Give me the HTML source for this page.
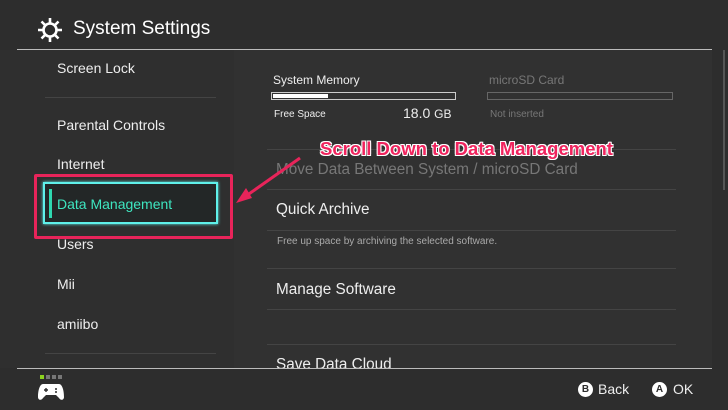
<!DOCTYPE html>
<html><head><style>
body{margin:0;width:728px;height:410px;background:#2d2d2d;font-family:"Liberation Sans","DejaVu Sans",sans-serif;overflow:hidden;position:relative;color:#fff}
.a{position:absolute;white-space:nowrap}
.sep{position:absolute;height:1px;background:#444}
.l{font-size:14px;color:#eee}
</style></head><body>
<div class="a" style="left:0;top:50px;width:234px;height:318px;background:#2f2f2f"></div>
<div class="a" style="left:234px;top:50px;width:478px;height:318px;background:#313131"></div>
<svg class="a" style="left:37px;top:17px" width="26" height="26" viewBox="0 0 26 26"><g fill="none" stroke="#fff" stroke-width="2.6"><circle cx="13" cy="13" r="6.5"/><path d="M13 1v5M13 20v5M1 13h5M20 13h5M4.5 4.5l3.5 3.5M18 18l3.5 3.5M4.5 21.5L8 18M18 8l3.5-3.5"/></g></svg>
<div class="a" style="left:73px;top:18px;font-size:19px;color:#fff">System Settings</div>
<div class="a" style="left:17px;top:49px;width:695px;height:1px;background:#bbb"></div>
<div class="a l" style="left:57px;top:60px">Screen Lock</div>
<div class="sep" style="left:45px;top:97px;width:171px"></div>
<div class="a l" style="left:57px;top:117px">Parental Controls</div>
<div class="a l" style="left:57px;top:156px">Internet</div>
<div class="a" style="left:43px;top:182px;width:171px;height:38px;background:#232727;border:2px solid #5ff0ea;box-shadow:0 0 3px #5ff0ea"></div>
<div class="a" style="left:49px;top:189px;width:3px;height:29px;background:#2ed8b0"></div>
<div class="a" style="left:57px;top:196px;font-size:14px;color:#3ee6c0">Data Management</div>
<div class="a" style="left:34px;top:174px;width:193px;height:59px;border:3px solid #e8245a;border-radius:2px"></div>
<div class="a l" style="left:57px;top:236px">Users</div>
<div class="a l" style="left:57px;top:276px">Mii</div>
<div class="a l" style="left:57px;top:316px">amiibo</div>
<div class="sep" style="left:45px;top:353px;width:171px"></div>

<div class="a" style="left:273px;top:73px;font-size:12px;color:#eee">System Memory</div>
<div class="a" style="left:271px;top:92px;width:183px;height:6px;border:1px solid #ccc"></div>
<div class="a" style="left:273px;top:94px;width:55px;height:4px;background:#fff"></div>
<div class="a" style="left:274px;top:109px;font-size:10px;color:#eee">Free Space</div>
<div class="a" style="left:403px;top:105px;font-size:14px;color:#eee">18.0 <span style="font-size:12px">GB</span></div>
<div class="a" style="left:489px;top:73px;font-size:12px;color:#777">microSD Card</div>
<div class="a" style="left:487px;top:92px;width:184px;height:6px;border:1px solid #666"></div>
<div class="a" style="left:490px;top:109px;font-size:10px;color:#777">Not inserted</div>
<div class="sep" style="left:267px;top:149px;width:409px"></div>
<div class="a" style="left:276px;top:161px;font-size:15.3px;color:#777">Move Data Between System / microSD Card</div>
<div class="sep" style="left:267px;top:189px;width:409px"></div>
<div class="a" style="left:276px;top:201px;font-size:15.3px;color:#eee">Quick Archive</div>
<div class="sep" style="left:267px;top:230px;width:409px"></div>
<div class="a" style="left:277px;top:236px;font-size:10px;color:#aaa">Free up space by archiving the selected software.</div>
<div class="sep" style="left:267px;top:268px;width:409px"></div>
<div class="a" style="left:276px;top:281px;font-size:15.3px;color:#eee">Manage Software</div>
<div class="sep" style="left:267px;top:309px;width:409px"></div>
<div class="sep" style="left:267px;top:344px;width:409px"></div>
<div class="a" style="left:276px;top:356px;height:12px;overflow:hidden;font-size:15.3px;color:#eee;line-height:18px">Save Data Cloud</div>
<div class="a" style="left:723px;top:50px;width:2px;height:140px;background:#555"></div>

<div class="a" style="left:17px;top:368px;width:695px;height:1px;background:#bbb"></div>
<div class="a" style="left:40px;top:375px;width:4px;height:4px;background:#8cd31e"></div>
<div class="a" style="left:46px;top:375px;width:4px;height:4px;background:#777"></div>
<div class="a" style="left:52px;top:375px;width:4px;height:4px;background:#777"></div>
<div class="a" style="left:58px;top:375px;width:4px;height:4px;background:#777"></div>
<svg class="a" style="left:38px;top:383px" width="26" height="18" viewBox="0 0 26 18"><path d="M5 1h16c3 0 5 6 5 13c0 3-3 4-5 1l-3-3H8l-3 3c-2 3-5 2-5-1C0 7 2 1 5 1z" fill="#fff"/><path d="M6 7h4M8 5v4" stroke="#2d2d2d" stroke-width="1.4"/><circle cx="18" cy="6" r="1" fill="#2d2d2d"/><circle cx="18" cy="9" r="1" fill="#2d2d2d"/></svg>
<div class="a" style="left:578px;top:382px;width:15px;height:15px;border-radius:50%;background:#fff;color:#2d2d2d;font-size:10px;font-weight:bold;text-align:center;line-height:15px">B</div>
<div class="a" style="left:598px;top:381px;font-size:14px;color:#eee">Back</div>
<div class="a" style="left:652px;top:382px;width:15px;height:15px;border-radius:50%;background:#fff;color:#2d2d2d;font-size:10px;font-weight:bold;text-align:center;line-height:15px">A</div>
<div class="a" style="left:673px;top:381px;font-size:14px;color:#eee">OK</div>

<svg class="a" style="left:0;top:0" width="728" height="410"><path d="M300 158L246 196" stroke="#e8245a" stroke-width="3"/><path d="M236 203L246 188L252 198z" fill="#e8245a"/></svg>
<div class="a" style="left:320px;top:138px;font-size:18.5px;font-weight:bold;color:#f0245e;text-shadow:-1px -1px 0 #fff,1px -1px 0 #fff,-1px 1px 0 #fff,1px 1px 0 #fff,0 1px 0 #fff,0 -1px 0 #fff">Scroll Down to Data Management</div>
</body></html>
